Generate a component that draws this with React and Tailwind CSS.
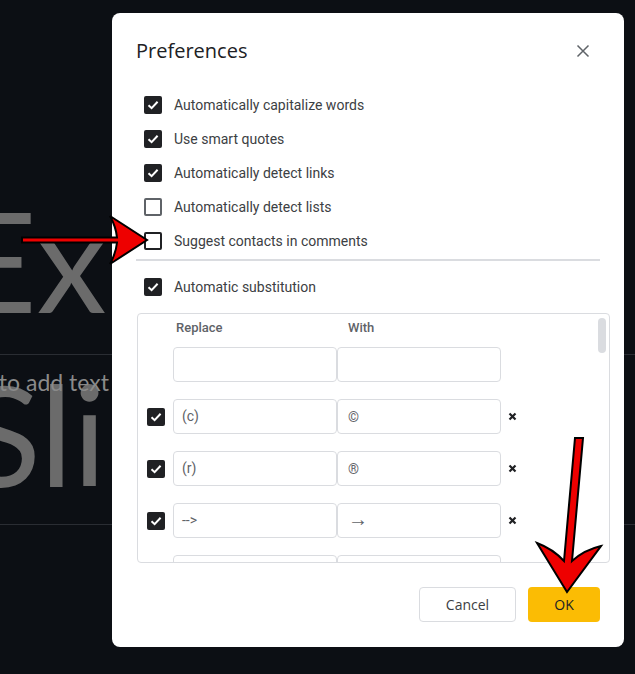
import React from "react";

const prefs = [
    { label: "Automatically capitalize words", checked: true },
    { label: "Use smart quotes", checked: true },
    { label: "Automatically detect links", checked: true },
    { label: "Automatically detect lists", checked: false },
    { label: "Suggest contacts in comments", checked: false, dark: true },
];

const subs = [
    { from: "", to: "", empty: true },
    { from: "(c)", to: "©" },
    { from: "(r)", to: "®" },
    { from: "-->", to: "→", big: true },
    { from: "", to: "", empty: true },
];

const CheckBox = ({ checked, dark }) => {
    if (checked) {
        return (
            <div className="flex h-[18px] w-[18px] shrink-0 items-center justify-center rounded-[2px] bg-[#202124]">
                <svg width="14" height="14" viewBox="0 0 14 14">
                    <path d="M2.5 7.3 L5.6 10.2 L11.6 3.8" fill="none" stroke="#ffffff" strokeWidth="2" />
                </svg>
            </div>
        );
    }
    return (
        <div
            className={`h-[18px] w-[18px] shrink-0 rounded-[2px] border-2 ${
                dark ? "border-[#202124]" : "border-[#5f6368]"
            }`}
        />
    );
};

// slide behind the dialog, only the left edge shows
const Background = () => {
    return (
        <div className="absolute inset-0 overflow-hidden" style={{ fontFamily: "Lato, sans-serif" }}>
            <div className="absolute left-0 top-[354px] h-px w-full bg-[#2a2d33]" />
            <div className="absolute left-0 top-[524px] h-px w-full bg-[#2a2d33]" />
            <div className="absolute left-[-44px] top-[190px] whitespace-nowrap text-[140px] font-normal leading-[138px] text-[#6b6b6b]">
                Ex
            </div>
            <div className="absolute left-[-35px] top-[364px] whitespace-nowrap text-[140px] font-normal leading-[138px] text-[#6b6b6b]">
                Sli
            </div>
            <div className="absolute left-[-56px] top-[367px] whitespace-nowrap text-[23px] leading-[30px] text-[#8a8a8a]">
                Click to add text
            </div>
        </div>
    );
};

const Arrows = () => {
    return (
        <svg className="pointer-events-none absolute inset-0" width="635" height="674" viewBox="0 0 635 674">
            <path
                d="M22 237.5 L117 237.5 Q116 227 110 216 L147 240 L110 264 Q116 253 117 242.5 L22 242.5 Z"
                fill="#ee0000"
                stroke="#000000"
                strokeWidth="2"
            />
            <path
                d="M575 438 L583 438 L572 561 Q584 550 601 546 L567 592 L537 543 Q553 549 564 561 Z"
                fill="#ee0000"
                stroke="#000000"
                strokeWidth="2"
            />
        </svg>
    );
};

export default function App() {
    return (
        <div className="relative h-[674px] w-[635px] overflow-hidden bg-[#0c0f14]">
            <Background />

            {/* dialog */}
            <div
                className="absolute left-[112px] top-[13px] flex h-[634px] w-[512px] flex-col rounded-lg bg-white"
                style={{ fontFamily: "Roboto, 'Liberation Sans', sans-serif" }}
            >
                <div className="flex items-center justify-between pl-6 pr-[29px] pt-[26px]">
                    <div
                        className="text-[20px] leading-6 text-[#202124]"
                        style={{ fontFamily: "'Open Sans', sans-serif" }}
                    >
                        Preferences
                    </div>
                    <div className="flex h-6 w-6 items-center justify-center">
                        <svg width="14" height="14" viewBox="0 0 14 14">
                            <path d="M1.5 1.5 L12.5 12.5 M12.5 1.5 L1.5 12.5" stroke="#5f6368" strokeWidth="1.5" />
                        </svg>
                    </div>
                </div>

                <div className="mt-[25px] flex flex-col">
                    {prefs.map((p, i) => (
                        <div key={i} className="flex h-[34px] items-center gap-3 pl-8">
                            <CheckBox checked={p.checked} dark={p.dark} />
                            <span className="text-[14px] text-[#3c4043]">{p.label}</span>
                        </div>
                    ))}
                </div>

                <div className="mx-6 mt-[1px] h-[2px] bg-[#dadce0]" />

                <div className="mt-[9px] flex h-[34px] items-center gap-3 pl-8">
                    <CheckBox checked />
                    <span className="text-[14px] text-[#3c4043]">Automatic substitution</span>
                </div>

                <div className="relative ml-[25px] mr-[14px] mt-[9px] h-[250px] overflow-hidden rounded border border-[#dadce0]">
                    <div className="mt-[6px] flex h-4 items-center pl-[38px] text-[13px] font-medium text-[#5f6368]">
                        <span className="w-[172px]">Replace</span>
                        <span>With</span>
                    </div>
                    <div className="mt-[11px] flex flex-col gap-[17px]">
                        {subs.map((s, i) => (
                            <div key={i} className="flex h-[35px] items-center">
                                <div className="flex w-[35px] shrink-0 justify-start pl-[9px]">
                                    {!s.empty && <CheckBox checked />}
                                </div>
                                <div className="flex h-[35px] w-[164px] items-center rounded border border-[#dadce0] pl-[8px] text-[14px] text-[#5f6368]">
                                    {s.from}
                                </div>
                                <div
                                    className={`flex h-[35px] w-[164px] items-center rounded border border-[#dadce0] pl-[10px] leading-none text-[#5f6368] ${
                                        s.big ? "pb-[3px] text-[20px]" : "text-[14px]"
                                    }`}
                                >
                                    {s.to}
                                </div>
                                {!s.empty && (
                                    <svg className="ml-[7px]" width="9" height="9" viewBox="0 0 9 9">
                                        <path d="M1.5 1.5 L7.5 7.5 M7.5 1.5 L1.5 7.5" stroke="#202124" strokeWidth="2.2" />
                                    </svg>
                                )}
                            </div>
                        ))}
                    </div>
                    <div className="absolute right-[3px] top-[4px] h-[35px] w-[8px] rounded bg-[#dadce0]" />
                </div>

                <div className="mt-6 flex justify-end gap-3 pr-6" style={{ fontFamily: "'Open Sans', sans-serif" }}>
                    <button className="h-[35px] w-[97px] rounded border border-[#dadce0] bg-white text-[14px] text-[#3c4043]">
                        Cancel
                    </button>
                    <button className="h-[35px] w-[72px] rounded bg-[#fbbc04] text-[14px] text-[#202124]">
                        OK
                    </button>
                </div>
            </div>

            <Arrows />
        </div>
    );
}
